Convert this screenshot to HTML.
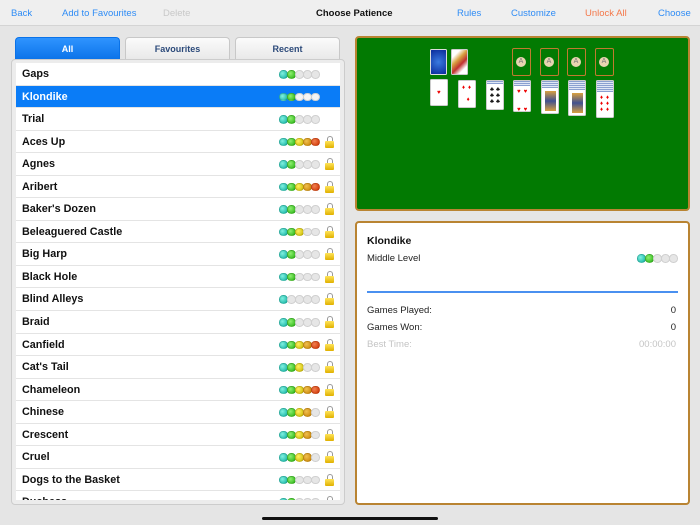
<!DOCTYPE html>
<html><head><meta charset="utf-8"><style>
*{margin:0;padding:0;box-sizing:border-box}
body{width:700px;height:525px;background:#e5e5e5;font-family:"Liberation Sans",sans-serif;position:relative;overflow:hidden}
.a{position:absolute}
.top{left:0;top:0;width:700px;height:26px;background:#efefef;border-bottom:1px solid #d4d4d4}
.top span{position:absolute;top:8px;font-size:9.5px;color:#2f8cf5}
.tab{top:37px;height:23px;width:105px;border:1px solid #c8c8c8;border-bottom:none;border-radius:4px 4px 0 0;background:linear-gradient(#fbfbfb,#e8e8e8);font-size:9px;font-weight:bold;color:#2c4a7a;text-align:center;line-height:22px}
.list{left:11px;top:59px;width:334px;height:446px;background:#ececec;border:1px solid #ccc;border-radius:4px}
.rows{left:16px;top:63px;width:324px;height:437px;background:#fff;overflow:hidden}
.row{height:22.55px;border-bottom:1px solid #e4e4e4;position:relative;font-size:10.8px;font-weight:bold;color:#111;line-height:23px;padding-left:6px}
.row.sel{background:#0a7cf7;color:#fff}
.dots{position:absolute;left:263px;top:7px;width:44px;height:9px}
.d{position:absolute;top:0;width:8.5px;height:8.5px;border-radius:50%;border:1px solid rgba(0,0,0,.12);display:block}
.d:nth-child(1){left:0}.d:nth-child(2){left:8px}.d:nth-child(3){left:16px}.d:nth-child(4){left:24px}.d:nth-child(5){left:32px}
.e{background:#e6e6e6;border-color:#d0d0d0}
.t{background:radial-gradient(circle at 35% 35%,#7ff0e0,#10b0a0)}
.g{background:radial-gradient(circle at 35% 35%,#8ff070,#25b010)}
.y{background:radial-gradient(circle at 35% 35%,#fff060,#c8b800)}
.o{background:radial-gradient(circle at 35% 35%,#f0c050,#c88000)}
.r{background:radial-gradient(circle at 35% 35%,#f08050,#d03000)}
.sel .e{background:#f4f4f4}
.lock{position:absolute;left:309px;top:5px;width:9px;height:12px}
.lock:before{content:"";position:absolute;left:1.5px;top:0;width:6px;height:6px;border:1.5px solid #999;border-bottom:none;border-radius:3px 3px 0 0;box-sizing:border-box}
.lock:after{content:"";position:absolute;left:0;top:5px;width:9px;height:7px;background:linear-gradient(#ffe45a,#e0b000);border-radius:1px}
.felt{left:355px;top:36px;width:335px;height:175px;background:#027a02;border:2px solid #b98432;border-radius:4px}
.info{left:355px;top:221px;width:335px;height:284px;background:#fff;border:2px solid #b98432;border-radius:4px}
.c{position:absolute;background:#fff;border:1px solid #ccc;border-radius:1.5px;overflow:hidden}
.f{position:absolute;border:1.5px solid #c07a30;border-radius:2px;width:19px;height:28px}
.f:after{content:"A";position:absolute;left:3px;top:8px;width:10px;height:10px;border-radius:50%;background:#e8d5b0;font-size:7px;color:#777;text-align:center;line-height:10px}
.bk{position:absolute;background:repeating-linear-gradient(#8aa0d0 0 1px,#dfe6f5 1px 2px)}
.pip{position:absolute;font-size:6px;line-height:6px}
.info div{position:absolute;font-size:9.5px;color:#222}
</style></head><body>
<div class="a top">
<span style="left:11px">Back</span><span style="left:62px">Add to Favourites</span><span style="left:163px;color:#c8c8c8">Delete</span>
<span style="left:316px;color:#111;font-weight:bold">Choose Patience</span>
<span style="left:457px">Rules</span><span style="left:511px">Customize</span><span style="left:585px;color:#f4784a">Unlock All</span><span style="left:658px">Choose</span>
</div>
<div class="a tab" style="left:15px;background:linear-gradient(#2f94ff,#0a72e8);color:#fff;border-color:#0a72e8">All</div>
<div class="a tab" style="left:125px">Favourites</div>
<div class="a tab" style="left:235px">Recent</div>
<div class="a list"></div>
<div class="a rows">
<div class="row">Gaps<div class="dots"><i class="d t"></i><i class="d g"></i><i class="d e"></i><i class="d e"></i><i class="d e"></i></div></div>
<div class="row sel">Klondike<div class="dots"><i class="d t"></i><i class="d g"></i><i class="d e"></i><i class="d e"></i><i class="d e"></i></div></div>
<div class="row">Trial<div class="dots"><i class="d t"></i><i class="d g"></i><i class="d e"></i><i class="d e"></i><i class="d e"></i></div></div>
<div class="row">Aces Up<div class="dots"><i class="d t"></i><i class="d g"></i><i class="d y"></i><i class="d o"></i><i class="d r"></i></div><i class="lock"></i></div>
<div class="row">Agnes<div class="dots"><i class="d t"></i><i class="d g"></i><i class="d e"></i><i class="d e"></i><i class="d e"></i></div><i class="lock"></i></div>
<div class="row">Aribert<div class="dots"><i class="d t"></i><i class="d g"></i><i class="d y"></i><i class="d o"></i><i class="d r"></i></div><i class="lock"></i></div>
<div class="row">Baker's Dozen<div class="dots"><i class="d t"></i><i class="d g"></i><i class="d e"></i><i class="d e"></i><i class="d e"></i></div><i class="lock"></i></div>
<div class="row">Beleaguered Castle<div class="dots"><i class="d t"></i><i class="d g"></i><i class="d y"></i><i class="d e"></i><i class="d e"></i></div><i class="lock"></i></div>
<div class="row">Big Harp<div class="dots"><i class="d t"></i><i class="d g"></i><i class="d e"></i><i class="d e"></i><i class="d e"></i></div><i class="lock"></i></div>
<div class="row">Black Hole<div class="dots"><i class="d t"></i><i class="d g"></i><i class="d e"></i><i class="d e"></i><i class="d e"></i></div><i class="lock"></i></div>
<div class="row">Blind Alleys<div class="dots"><i class="d t"></i><i class="d e"></i><i class="d e"></i><i class="d e"></i><i class="d e"></i></div><i class="lock"></i></div>
<div class="row">Braid<div class="dots"><i class="d t"></i><i class="d g"></i><i class="d e"></i><i class="d e"></i><i class="d e"></i></div><i class="lock"></i></div>
<div class="row">Canfield<div class="dots"><i class="d t"></i><i class="d g"></i><i class="d y"></i><i class="d o"></i><i class="d r"></i></div><i class="lock"></i></div>
<div class="row">Cat's Tail<div class="dots"><i class="d t"></i><i class="d g"></i><i class="d y"></i><i class="d e"></i><i class="d e"></i></div><i class="lock"></i></div>
<div class="row">Chameleon<div class="dots"><i class="d t"></i><i class="d g"></i><i class="d y"></i><i class="d o"></i><i class="d r"></i></div><i class="lock"></i></div>
<div class="row">Chinese<div class="dots"><i class="d t"></i><i class="d g"></i><i class="d y"></i><i class="d o"></i><i class="d e"></i></div><i class="lock"></i></div>
<div class="row">Crescent<div class="dots"><i class="d t"></i><i class="d g"></i><i class="d y"></i><i class="d o"></i><i class="d e"></i></div><i class="lock"></i></div>
<div class="row">Cruel<div class="dots"><i class="d t"></i><i class="d g"></i><i class="d y"></i><i class="d o"></i><i class="d e"></i></div><i class="lock"></i></div>
<div class="row">Dogs to the Basket<div class="dots"><i class="d t"></i><i class="d g"></i><i class="d e"></i><i class="d e"></i><i class="d e"></i></div><i class="lock"></i></div>
<div class="row">Duchess<div class="dots"><i class="d t"></i><i class="d g"></i><i class="d e"></i><i class="d e"></i><i class="d e"></i></div><i class="lock"></i></div>
</div>
<div class="a felt"></div>
<div class="c" style="left:430px;top:49px;width:17px;height:26px;background:radial-gradient(circle,#3a7ae0,#0a2a9a);border-color:#ddd"></div>
<div class="c" style="left:451px;top:49px;width:17px;height:26px;background:linear-gradient(135deg,#fff 20%,#d9a040 40%,#c03030 60%,#fff 80%)"></div>
<div class="f" style="left:512px;top:48px"></div><div class="f" style="left:540px;top:48px"></div><div class="f" style="left:567px;top:48px"></div><div class="f" style="left:595px;top:48px"></div>
<div class="c" style="left:430px;top:79px;width:18px;height:27px"><span class="pip" style="left:6px;top:10px;color:#e00">♥</span></div>
<div class="c" style="left:458px;top:80px;width:18px;height:28px"><span class="pip" style="left:3px;top:4px;color:#e00;letter-spacing:3px">♦♦<br><br>&nbsp;♦<br><br>♦♦</span></div>
<div class="c" style="left:486px;top:80px;width:18px;height:30px"><div class="bk" style="left:0;top:0;width:16px;height:3px"></div><span class="pip" style="left:3px;top:6px;color:#000;letter-spacing:2px">♣♣<br>♣♣<br>♣♣</span></div>
<div class="c" style="left:513px;top:80px;width:18px;height:32px"><div class="bk" style="left:0;top:0;width:16px;height:5px"></div><span class="pip" style="left:3px;top:8px;color:#e00;letter-spacing:3px">♥♥<br><br><br>♥♥</span></div>
<div class="c" style="left:541px;top:80px;width:18px;height:34px"><div class="bk" style="left:0;top:0;width:16px;height:7px"></div><div class="a" style="left:3px;top:10px;width:11px;height:20px;background:linear-gradient(#d9a040,#405090,#d9a040)"></div></div>
<div class="c" style="left:568px;top:80px;width:18px;height:36px"><div class="bk" style="left:0;top:0;width:16px;height:9px"></div><div class="a" style="left:3px;top:12px;width:11px;height:20px;background:linear-gradient(#d9a040,#405090,#d9a040)"></div></div>
<div class="c" style="left:596px;top:80px;width:18px;height:38px"><div class="bk" style="left:0;top:0;width:16px;height:11px"></div><span class="pip" style="left:3px;top:14px;color:#e00;letter-spacing:3px">♦♦<br>♦♦<br>♦♦</span></div>
<div class="a info">
<div style="left:10px;top:12px;font-weight:bold;font-size:10.5px;color:#111">Klondike</div>
<div style="left:10px;top:30px">Middle Level</div>
<div style="left:280px;top:31px;width:44px;height:9px"><i class="d t"></i><i class="d g"></i><i class="d e"></i><i class="d e"></i><i class="d e"></i></div>
<div style="left:10px;top:68px;width:311px;height:2px;background:#4a90f0"></div>
<div style="left:10px;top:82px">Games Played:</div><div style="right:12px;top:82px">0</div>
<div style="left:10px;top:99px">Games Won:</div><div style="right:12px;top:99px">0</div>
<div style="left:10px;top:116px;color:#c4c4c4">Best Time:</div><div style="right:12px;top:116px;color:#c4c4c4">00:00:00</div>
</div>
<div class="a" style="left:262px;top:517px;width:176px;height:3px;border-radius:2px;background:#111"></div>
</body></html>
